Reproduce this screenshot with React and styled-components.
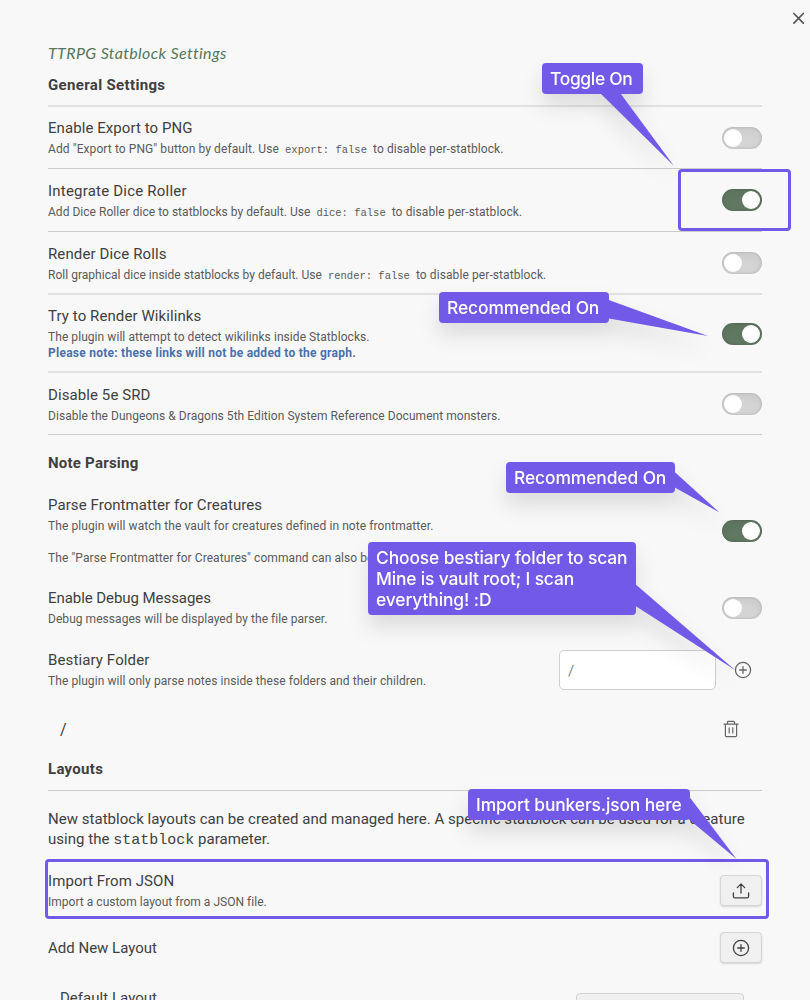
import React from "react";
import styled, { createGlobalStyle } from "styled-components";

const GlobalStyle = createGlobalStyle`
  * { box-sizing: border-box; }
  body {
    margin: 0;
    background: #f8f8f8;
    color: #404040;
    font-family: Roboto, "Open Sans", sans-serif;
    font-size: 15px;
  }
`;

const Page = styled.main`
  position: relative;
  width: 810px;
  height: 1000px;
  overflow: hidden;
  padding: 43px 48px 0;
  background: #f8f8f8;
`;

const CloseButton = styled.button`
  position: absolute;
  top: 12px;
  right: 5px;
  width: 13px;
  height: 13px;
  padding: 0;
  border: 0;
  background: none;
  svg { display: block; }
`;

const Title = styled.h1`
  margin: 0;
  height: 20px;
  font: italic 400 16px/20px Lato, sans-serif;
  letter-spacing: 0.37px;
  color: #55765a;
`;

const SectionTitle = styled.h2`
  margin: ${(p) => p.$margin};
  font-size: 15px;
  line-height: 20px;
  font-weight: 700;
  letter-spacing: ${(p) => p.$track}px;
`;

const List = styled.section`
  border-top: 2px solid #e2e2e2;
  border-bottom: 1px solid #cbcbcb;
`;

const dividers = {
  thin: "1px solid #cbcbcb",
  soft: "2px solid #e2e2e2",
};

const Row = styled.div`
  display: flex;
  align-items: center;
  justify-content: space-between;
  padding: ${(p) => p.$pad || "11px 0"};
  border-top: ${(p) => dividers[p.$divider] || "0"};
`;

const Info = styled.div`
  flex: 1;
  white-space: nowrap;
`;

const Name = styled.div`
  line-height: 20px;
  letter-spacing: ${(p) => p.$track || 0}px;
`;

const Description = styled.div`
  margin-top: 3px;
  font-size: 12px;
  line-height: 16px;
  color: #5a5a5a;
  letter-spacing: ${(p) => p.$track || 0}px;
`;

const Tail = styled.span`
  letter-spacing: 0.095px;
`;

const Code = styled.code`
  margin: 0 ${(p) => (p.$large ? "0" : "3px")};
  font-family: "Liberation Mono", monospace;
  font-size: ${(p) => (p.$large ? 15 : 10.5)}px;
  line-height: 1;
  letter-spacing: 0;
`;

const Warning = styled.strong`
  display: block;
  color: #4a70ad;
  font-weight: 700;
  letter-spacing: 0.25px;
`;

const Toggle = styled.span`
  display: flex;
  justify-content: ${(p) => (p.$on ? "flex-end" : "flex-start")};
  width: 40px;
  height: 22px;
  padding: 2px;
  border-radius: 11px;
  background: ${(p) => (p.$on ? "#607862" : "#d4d4d4")};
  box-shadow: inset 0 0 2px 1px rgba(0, 0, 0, 0.08), inset 0 4px 10px rgba(0, 0, 0, 0.05);
  &::after {
    content: "";
    width: 18px;
    height: 18px;
    border-radius: 50%;
    background: #fff;
  }
`;

const FolderControl = styled.div`
  display: flex;
  align-items: center;
  gap: 18px;
  padding-right: 10px;
  margin: -9px 0;
  svg { display: block; }
`;

const FolderInput = styled.input`
  width: 157px;
  height: 40px;
  padding: 2px 9px 0 8px;
  border: 1px solid #cfcfcf;
  border-radius: 5px;
  background: #fff;
  font: 15px Roboto, sans-serif;
  color: #888;
  outline: 0;
`;

const FolderItem = styled.div`
  display: flex;
  align-items: center;
  justify-content: space-between;
  height: 20px;
  margin-top: 19px;
  padding: 0 22px 0 12px;
  font-size: 16px;
  svg { display: block; }
`;

const Intro = styled.p`
  margin: 0;
  padding: 18px 0 11px;
  border-top: 1px solid #cbcbcb;
  line-height: 20px;
  white-space: nowrap;
  letter-spacing: 0.03px;
`;

const IconButton = styled.button`
  display: grid;
  place-items: center;
  width: 42px;
  height: 31px;
  padding: 0;
  border: 1px solid #d5d5d5;
  border-radius: 4px;
  background: #f0f0f0;
  box-shadow: 0 1px 2px rgba(0, 0, 0, 0.14);
`;

const LayoutRow = styled.div`
  display: flex;
  justify-content: space-between;
  padding: 15px 18px 0 12px;
`;

const Select = styled.div`
  width: 168px;
  height: 31px;
  margin-top: 5px;
  border: 1px solid #d2d2d2;
  border-radius: 4px;
  background: #f0f0f0;
`;

const Highlight = styled.div`
  position: absolute;
  left: ${(p) => p.$x}px;
  top: ${(p) => p.$y}px;
  width: ${(p) => p.$w}px;
  height: ${(p) => p.$h}px;
  border: 3px solid #7359e8;
  border-radius: 4px;
`;

const CalloutGroup = styled.div`
  position: absolute;
  inset: 0;
  pointer-events: none;
  filter: drop-shadow(0 12px 10px rgba(0, 0, 0, 0.11));
`;

const Pointer = styled.svg`
  position: absolute;
  inset: 0;
  fill: #7359e8;
`;

const Label = styled.div`
  position: absolute;
  left: ${(p) => p.$x}px;
  top: ${(p) => p.$y}px;
  width: ${(p) => p.$w}px;
  padding: 5px 8px;
  border-radius: 4px;
  background: #7359e8;
  color: #fff;
  font: 500 17.4px/21px Inter, sans-serif;
  white-space: nowrap;
`;

const Line = styled.div`
  letter-spacing: ${(p) => p.$track}px;
`;

const Stroke = ({ w = 18, h = 18, box = "0 0 18 18", color = "#404040", width = 1.3, children }) => (
  <svg width={w} height={h} viewBox={box} fill="none" stroke={color} strokeWidth={width} strokeLinecap="round" strokeLinejoin="round">
    {children}
  </svg>
);

const PlusCircle = ({ color }) => (
  <Stroke color={color}>
    <circle cx="9" cy="9" r="7.6" />
    <path d="M9 5.7v6.6M5.7 9h6.6" />
  </Stroke>
);

const Setting = ({ name, track, descTrack, desc, on, control, pad, divider }) => (
  <Row $pad={pad} $divider={divider}>
    <Info>
      <Name $track={track}>{name}</Name>
      {desc && <Description $track={descTrack}>{desc}</Description>}
    </Info>
    {control || <Toggle $on={on} role="switch" aria-checked={!!on} />}
  </Row>
);

const withCode = (before, code) => (
  <>
    {before} <Code>{code}</Code> <Tail>to disable per-statblock.</Tail>
  </>
);

const Callout = ({ x, y, w, points, lines }) => (
  <CalloutGroup>
    <Pointer width="810" height="1000"><polygon points={points} /></Pointer>
    <Label $x={x} $y={y} $w={w}>
      {lines.map(([text, track]) => <Line key={text} $track={track}>{text}</Line>)}
    </Label>
  </CalloutGroup>
);

export default function App() {
  return (
    <Page>
      <GlobalStyle />
      <CloseButton aria-label="Close">
        <Stroke w={13} h={13} box="0 0 13 13" color="#555" width={1.7}>
          <path d="M1.9 1.5l9.4 9.6M11.3 1.5L1.9 11.1" />
        </Stroke>
      </CloseButton>

      <Title>TTRPG Statblock Settings</Title>
      <SectionTitle $margin="12px 0 10px" $track={0.34}>General Settings</SectionTitle>

      <List>
        <Setting pad="11px 0" name="Enable Export to PNG" track={0.07} descTrack={0.09}
          desc={withCode('Add "Export to PNG" button by default. Use', "export: false")} />
        <Setting divider="thin" pad="11.5px 0" name="Integrate Dice Roller" track={0.21} descTrack={0.03} on
          desc={withCode("Add Dice Roller dice to statblocks by default. Use", "dice: false")} />
        <Setting divider="thin" pad="11.5px 0 10.5px" name="Render Dice Rolls" track={0.12} descTrack={0.02}
          desc={withCode("Roll graphical dice inside statblocks by default. Use", "render: false")} />
        <Setting divider="soft" pad="11px 0 10px" name="Try to Render Wikilinks" track={0.09} descTrack={0.062} on
          desc={<>The plugin will attempt to detect wikilinks inside Statblocks.<Warning>Please note: these links will not be added to the graph.</Warning></>} />
        <Setting divider="soft" pad="11.5px 0 10.5px" name="Disable 5e SRD" track={0.09} descTrack={0.05}
          desc="Disable the Dungeons & Dragons 5th Edition System Reference Document monsters." />
      </List>

      <SectionTitle $margin="18px 0 11px" $track={0.23}>Note Parsing</SectionTitle>
      <Setting name="Parse Frontmatter for Creatures" track={0.07} descTrack={0.073} on
        desc={<>The plugin will watch the vault for creatures defined in note frontmatter.<br /><br />The "Parse Frontmatter for Creatures" command can also be</>} />
      <Setting pad="11px 0 12px" name="Enable Debug Messages" track={-0.06} descTrack={0.05}
        desc="Debug messages will be displayed by the file parser." />
      <Setting name="Bestiary Folder" track={0.12} descTrack={0.07}
        desc="The plugin will only parse notes inside these folders and their children."
        control={
          <FolderControl>
            <FolderInput defaultValue="/" />
            <PlusCircle color="#666" />
          </FolderControl>
        } />
      <FolderItem>
        <span>/</span>
        <Stroke color="#666" width={1.2}>
          <path d="M2 4.2h14M5.5 4V2.2q0-.9.9-.9h5.2q.9 0 .9.9V4M3.4 4.4v11.2q0 1.1 1.1 1.1h9q1.1 0 1.1-1.1V4.4M7.2 7.8v5.2M10.8 7.8v5.2" />
        </Stroke>
      </FolderItem>

      <SectionTitle $margin="20px 0 11px" $track={0.29}>Layouts</SectionTitle>
      <Intro>
        New statblock layouts can be created and managed here. A specific statblock can be used for a creature
        <br />
        using the <Code $large>statblock</Code> parameter.
      </Intro>
      <Setting name="Import From JSON" track={0.08} descTrack={0.025}
        desc="Import a custom layout from a JSON file."
        control={
          <IconButton aria-label="Import">
            <Stroke>
              <path d="M9 11V2.2M5.3 5.6L9 1.9l3.7 3.7M1.4 10.8v3.4q0 1.6 1.6 1.6h12q1.6 0 1.6-1.6v-3.4" />
            </Stroke>
          </IconButton>
        } />
      <Setting pad="11px 0 10px" name="Add New Layout"
        control={<IconButton aria-label="Add"><PlusCircle /></IconButton>} />
      <LayoutRow>
        <Name $track={0.03}>Default Layout</Name>
        <Select />
      </LayoutRow>

      <Highlight $x={678} $y={169} $w={113} $h={62} />
      <Highlight $x={45} $y={859} $w={724} $h={60} />
      <Callout x={542} y={63} w={101} points="597,90 618,90 674,166" lines={[["Toggle On", -0.3]]} />
      <Callout x={439} y={292} w={170} points="606,299 606,318 708,336" lines={[["Recommended On", -0.09]]} />
      <Callout x={506} y={462} w={169} points="673,470.5 673,486.5 719.5,512.5" lines={[["Recommended On", -0.09]]} />
      <Callout x={368} y={542} w={268} points="634,583 634,605 735,670"
        lines={[["Choose bestiary folder to scan", -0.11], ["Mine is vault root; I scan", -0.16], ["everything! :D", -0.1]]} />
      <Callout x={468} y={789} w={222} points="688,795 686,817 736.5,859" lines={[["Import bunkers.json here", -0.11]]} />
    </Page>
  );
}
